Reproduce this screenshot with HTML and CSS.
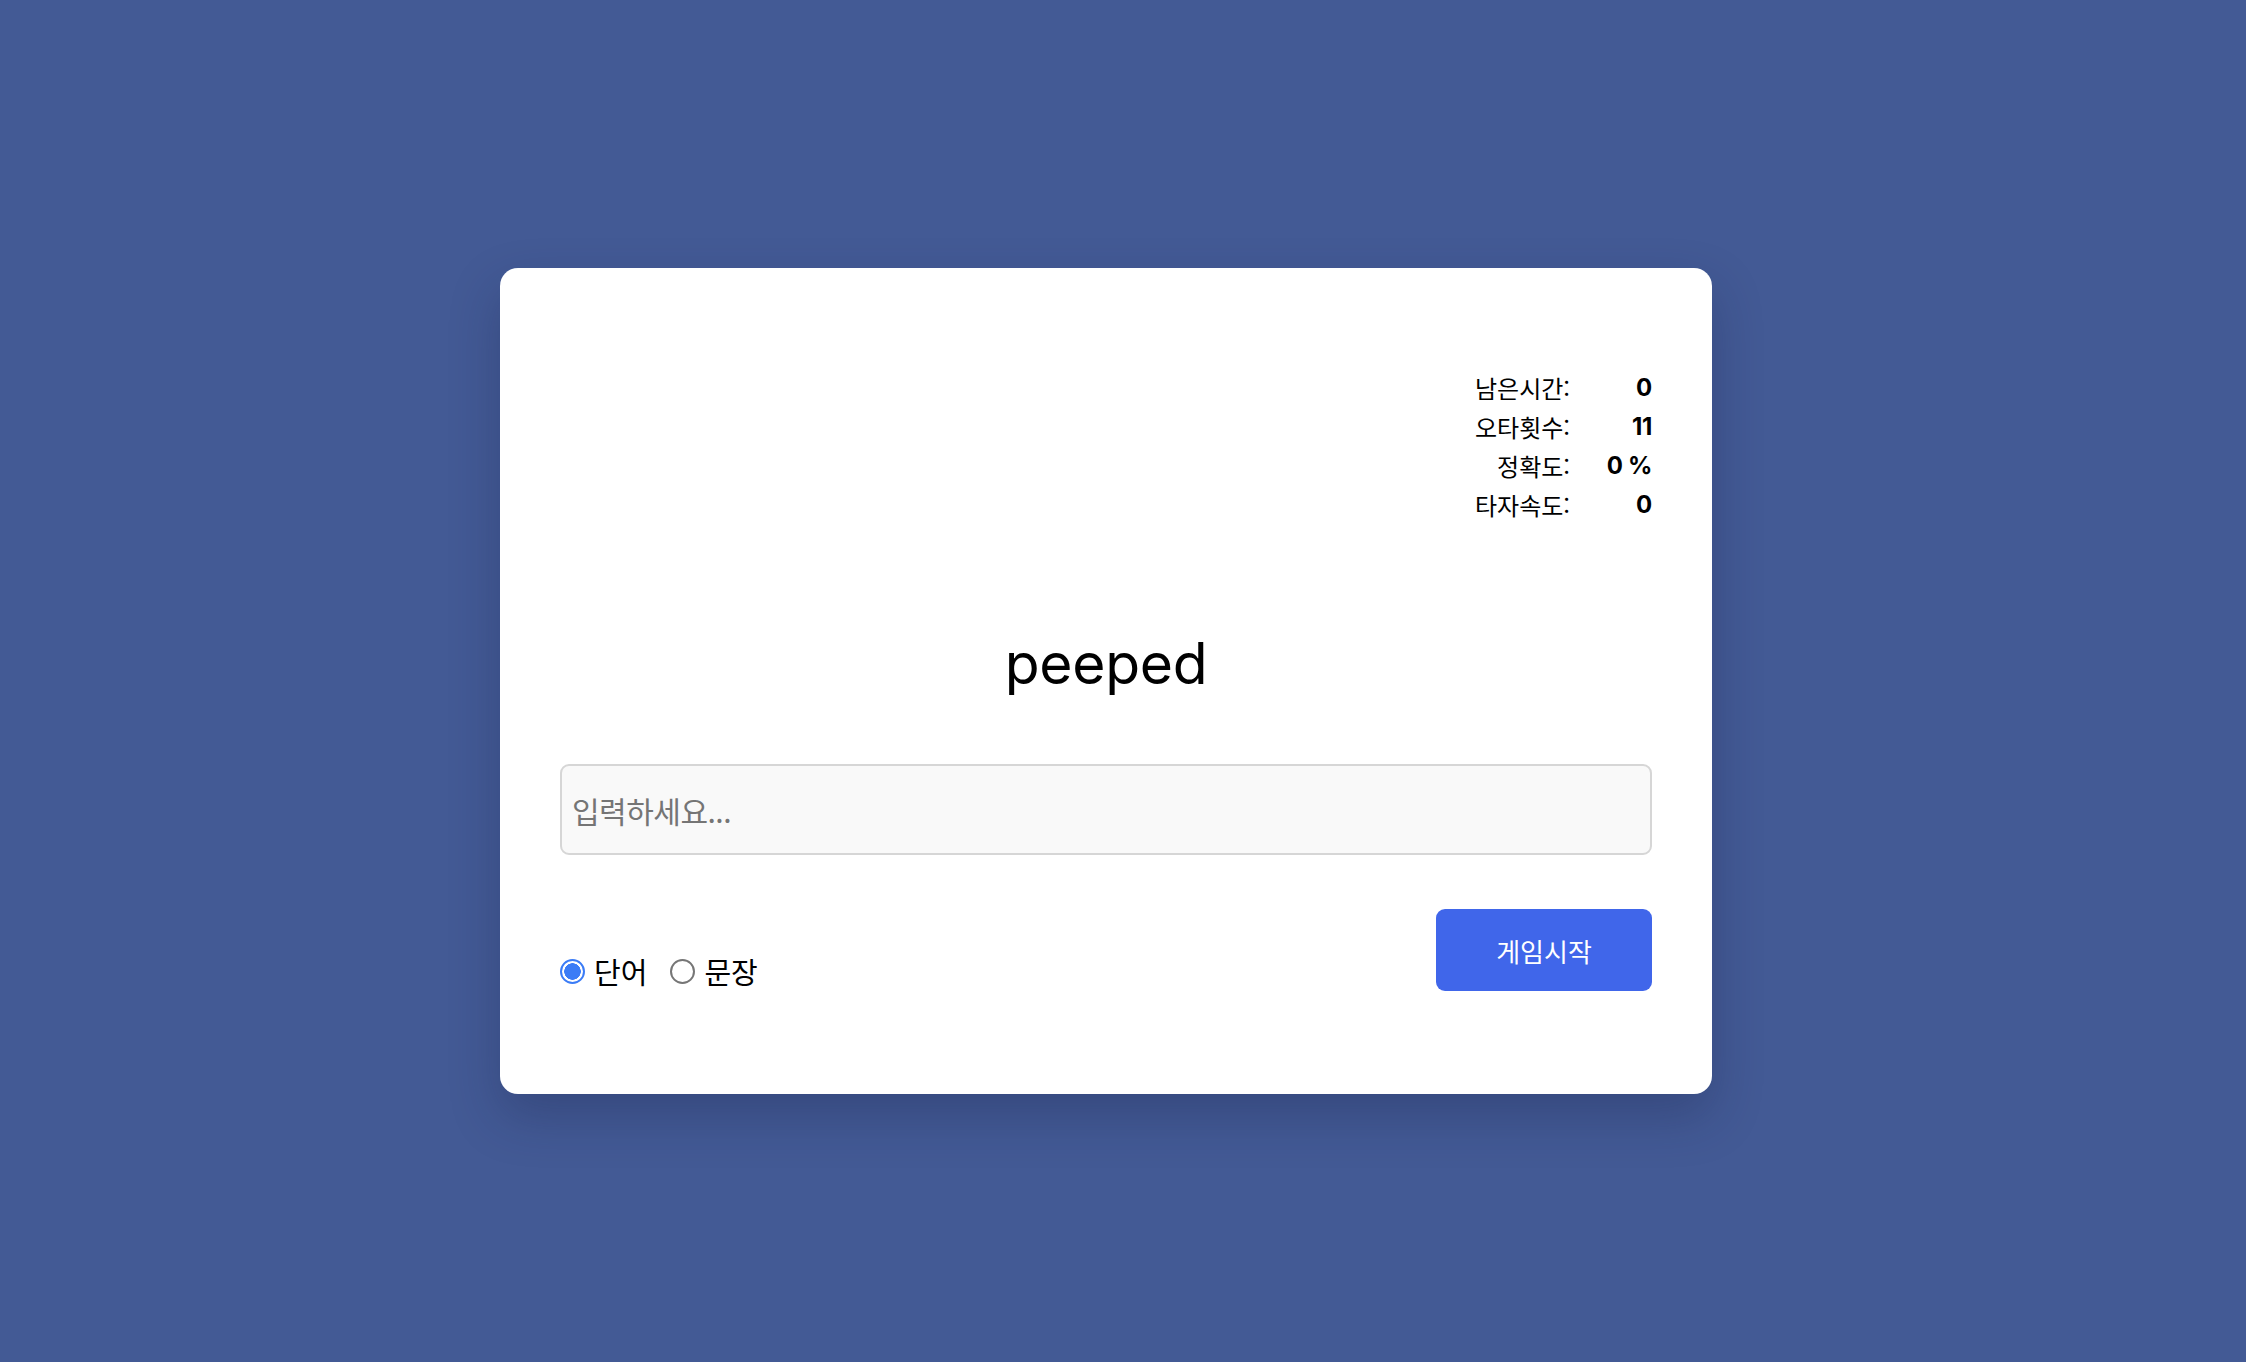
FILE: index.html
```html
<!DOCTYPE html>
<html lang="ko">
<head>
<meta charset="utf-8">
<title>타자 게임</title>
<link rel="stylesheet" href="styles.css">
</head>
<body>
<main class="card">
  <dl class="stats">
    <dt>남은시간:</dt><dd>0</dd>
    <dt>오타횟수:</dt><dd>11</dd>
    <dt>정확도:</dt><dd>0 %</dd>
    <dt>타자속도:</dt><dd>0</dd>
  </dl>
  <div class="word">peeped</div>
  <input class="typing" type="text" placeholder="입력하세요...">
  <div class="controls">
    <div class="modes">
      <label class="mode"><input type="radio" name="mode" checked><span>단어</span></label>
      <label class="mode"><input type="radio" name="mode"><span>문장</span></label>
    </div>
    <button class="start" type="button">게임시작</button>
  </div>
</main>
</body>
</html>
```

FILE: styles.css
```css
* { box-sizing: border-box; }

html, body {
  margin: 0;
  height: 100%;
}

body {
  background: #435a95;
  font-family: Inter, "Noto Sans CJK KR", sans-serif;
  color: #000;
  display: flex;
  justify-content: flex-start;
  padding: 268px 0 0 500px;
}

.card {
  width: 1212px;
  height: 826px;
  background: #fff;
  border-radius: 18px;
  padding: 60px 60px 0;
  box-shadow: 0 22px 50px rgba(20, 30, 70, 0.28);
  display: flex;
  flex-direction: column;
}

.stats {
  margin: 40px 0 0;
  align-self: flex-end;
  display: grid;
  grid-template-columns: auto 82px;
  font-size: 24px;
  line-height: 39px;
}

.stats dt {
  text-align: right;
  font-family: "Noto Sans CJK KR", sans-serif;
  letter-spacing: 0;
}

.stats dd {
  margin: 0;
  text-align: right;
  font-weight: 700;
  font-family: Inter, sans-serif;
  font-size: 24px;
  letter-spacing: -0.3px;
}

.word {
  margin-top: 108px;
  text-align: center;
  font-size: 57px;
  line-height: 64px;
  font-weight: 400;
  letter-spacing: -0.3px;
}

.typing {
  margin-top: 68px;
  width: 100%;
  height: 91px;
  border: 2px solid #d6d6d6;
  border-radius: 9px;
  background: #f9f9f9;
  padding: 0 10px;
  font-family: "Noto Sans CJK KR", sans-serif;
  font-size: 30px;
  letter-spacing: -0.5px;
  color: #333;
  outline: none;
}

.typing::placeholder {
  color: #757575;
}

.controls {
  margin-top: 54px;
  display: flex;
  justify-content: space-between;
  align-items: flex-end;
}

.modes {
  display: flex;
  gap: 23px;
  margin-bottom: 2px;
}

.mode {
  display: flex;
  align-items: center;
  gap: 9px;
  font-family: "Noto Sans CJK KR", sans-serif;
  font-size: 29px;
  line-height: 36px;
}

.mode input {
  appearance: none;
  -webkit-appearance: none;
  margin: 0;
  width: 25px;
  height: 25px;
  border-radius: 50%;
  border: 2px solid #767676;
  background: #fff;
}

.mode input:checked {
  border: 2px solid #3b7cf6;
  background: radial-gradient(circle, #3b7cf6 0 8px, #fff 8.5px);
}

.start {
  width: 216px;
  height: 82px;
  border: none;
  border-radius: 9px;
  background: #4066ea;
  color: #fff;
  font-family: "Noto Sans CJK KR", sans-serif;
  font-size: 26px;
  letter-spacing: 0;
  cursor: pointer;
}
```
